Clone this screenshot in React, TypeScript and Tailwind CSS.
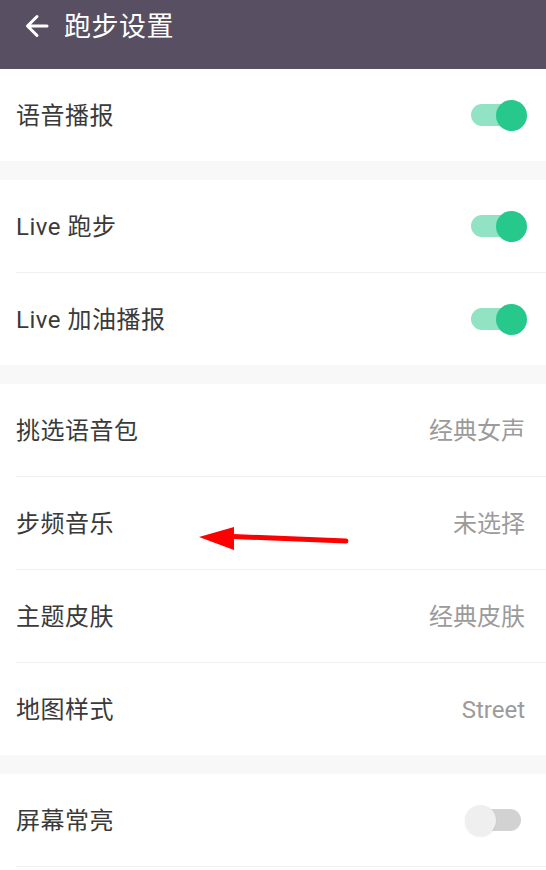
import React from "react";

const font = { fontFamily: '"Roboto", "Noto Sans CJK SC", sans-serif' };

function Toggle({ on }: { on: boolean }) {
  return (
    <div className="relative w-[62px] h-[31px] flex items-center justify-center">
      <div className={`w-[50px] h-[22px] rounded-full ${on ? "bg-[#91e3c3]" : "bg-[#d2d2d2]"}`} />
      <div
        className={`absolute top-0 w-[31px] h-[31px] rounded-full ${
          on ? "right-0 bg-[#27c88b]" : "left-0 bg-[#efefef] shadow-[0_1px_2px_rgba(0,0,0,0.08)]"
        }`}
      />
    </div>
  );
}

function Row({
  label,
  value,
  toggle,
  divider,
}: {
  label: string;
  value?: string;
  toggle?: boolean;
  divider?: boolean;
}) {
  return (
    <div className="bg-white pl-4">
      <div
        className={`h-[92px] flex items-center justify-between pr-[19px] ${
          divider ? "border-b border-[#efefef] h-[93px]" : ""
        }`}
      >
        <span className="text-[24px] text-[#3a3a3a] tracking-[0.5px] translate-y-[1px]">{label}</span>
        {value !== undefined && (
          <span className="text-[24px] text-[#9b9b9b] pr-[2px] translate-y-[1px]">{value}</span>
        )}
        {toggle !== undefined && <Toggle on={toggle} />}
      </div>
    </div>
  );
}

function Gap() {
  return <div className="h-[19px] bg-[#f8f8f8]" />;
}

export default function App() {
  return (
    <main className="w-[546px] h-[870px] overflow-hidden bg-white relative" style={font}>
      <header className="h-[69px] bg-[#585062] flex items-start pt-[11px] pl-6 gap-[14px]">
        <svg width="26" height="26" viewBox="0 0 26 26" className="mt-[2px]">
          <path
            d="M23 13H4M13 3.5L3.5 13L13 22.5"
            stroke="white"
            strokeWidth="3"
            fill="none"
            strokeLinecap="round"
            strokeLinejoin="round"
          />
        </svg>
        <h1 className="text-[27px] leading-[32px] text-white tracking-[0.5px]">跑步设置</h1>
      </header>

      <Row label="语音播报" toggle={true} />
      <Gap />
      <Row label="Live 跑步" toggle={true} divider />
      <Row label="Live 加油播报" toggle={true} />
      <Gap />
      <Row label="挑选语音包" value="经典女声" divider />
      <Row label="步频音乐" value="未选择" divider />
      <Row label="主题皮肤" value="经典皮肤" divider />
      <Row label="地图样式" value="Street" />
      <Gap />
      <Row label="屏幕常亮" toggle={false} divider />

      {/* red annotation arrow */}
      <svg
        className="absolute left-[196px] top-[524px]"
        width="156"
        height="30"
        viewBox="0 0 156 30"
      >
        <path d="M37 12.5 L150 17" stroke="#ff0000" strokeWidth="5" strokeLinecap="round" fill="none" />
        <polygon points="3,13 38,3 38,26" fill="#ff0000" />
      </svg>
    </main>
  );
}
